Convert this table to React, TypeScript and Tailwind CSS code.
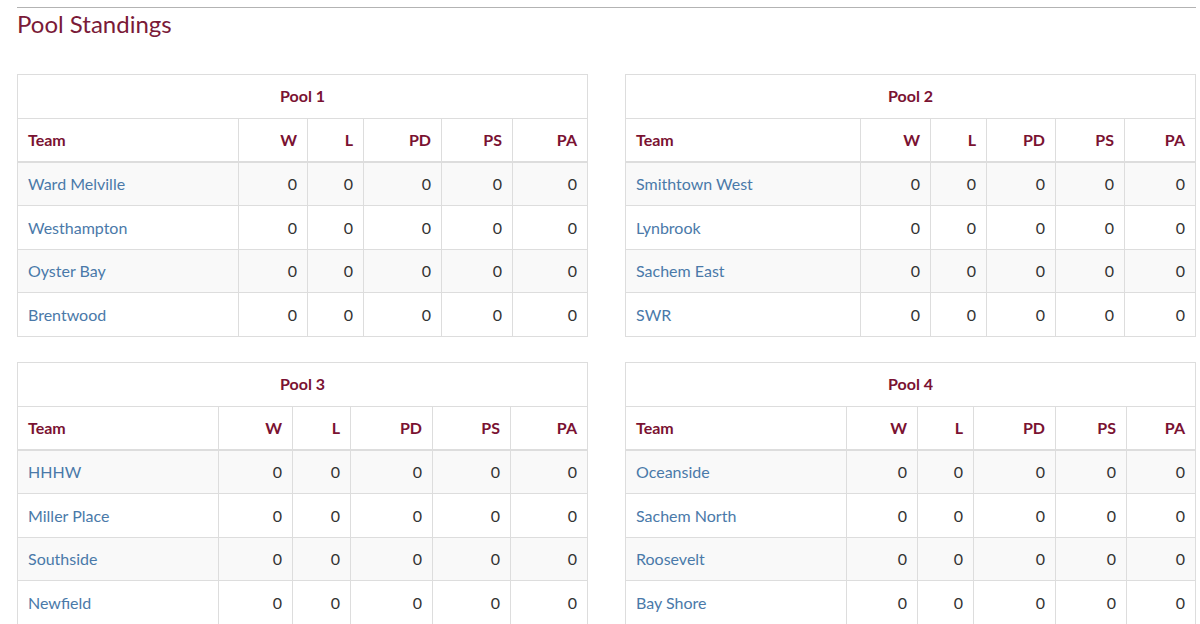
import React from "react";

type Pool = { name: string; widths: number[]; teams: string[] };

const pools: Pool[] = [
  { name: "Pool 1", widths: [221, 69, 56, 78, 71, 75], teams: ["Ward Melville", "Westhampton", "Oyster Bay", "Brentwood"] },
  { name: "Pool 2", widths: [235, 70, 56, 69, 69, 71], teams: ["Smithtown West", "Lynbrook", "Sachem East", "SWR"] },
  { name: "Pool 3", widths: [201, 74, 58, 82, 78, 77], teams: ["HHHW", "Miller Place", "Southside", "Newfield"] },
  { name: "Pool 4", widths: [221, 71, 56, 82, 71, 69], teams: ["Oceanside", "Sachem North", "Roosevelt", "Bay Shore"] },
];

const cols = ["W", "L", "PD", "PS", "PA"];
const rowHeights = ["h-[44px]", "h-[44px]", "h-[43px]", "h-[44px]"];

function PoolTable({ pool }: { pool: Pool }) {
  return (
    <table className="table-fixed border-collapse w-[570px] text-[16px]">
      <colgroup>
        {pool.widths.map((w, i) => (
          <col key={i} style={{ width: w }} />
        ))}
      </colgroup>
      <thead>
        <tr className="h-[44px]">
          <th colSpan={6} className="border border-[#dddddd] text-center font-bold text-[#7a1232] p-0 pb-[1px]">
            {pool.name}
          </th>
        </tr>
        <tr className="h-[43px]">
          <th className="border border-[#dddddd] border-b-2 text-left pl-[10px] font-bold text-[#7a1232] p-0">Team</th>
          {cols.map((c) => (
            <th key={c} className="border border-[#dddddd] border-b-2 text-right pr-[10px] font-bold text-[#7a1232] p-0">
              {c}
            </th>
          ))}
        </tr>
      </thead>
      <tbody>
        {pool.teams.map((t, i) => (
          <tr key={t} className={`${rowHeights[i]} ${i % 2 === 0 ? "bg-[#f9f9f9]" : "bg-white"}`}>
            <td className="border border-[#dddddd] pl-[10px] text-[#4a79a9] p-0">{t}</td>
            {cols.map((c) => (
              <td key={c} className="border border-[#dddddd] text-right pr-[10px] text-[#333333] p-0">
                0
              </td>
            ))}
          </tr>
        ))}
      </tbody>
    </table>
  );
}

export default function App() {
  return (
    <div className="w-[1200px] h-[624px] overflow-hidden bg-white" style={{ fontFamily: "Lato, 'Open Sans', sans-serif" }}>
      <div className="pt-[7px] pl-[17px] pr-[4px]">
        <div className="h-px bg-[#b3b3b3]" />
        <h1 className="mt-[2px] text-[24px] leading-[28px] text-[#7a1a38] font-normal">Pool Standings</h1>
        <div className="mt-[36px] grid grid-cols-[571px_571px] gap-x-[37px] gap-y-[25px]">
          {pools.map((p) => (
            <PoolTable key={p.name} pool={p} />
          ))}
        </div>
      </div>
    </div>
  );
}
